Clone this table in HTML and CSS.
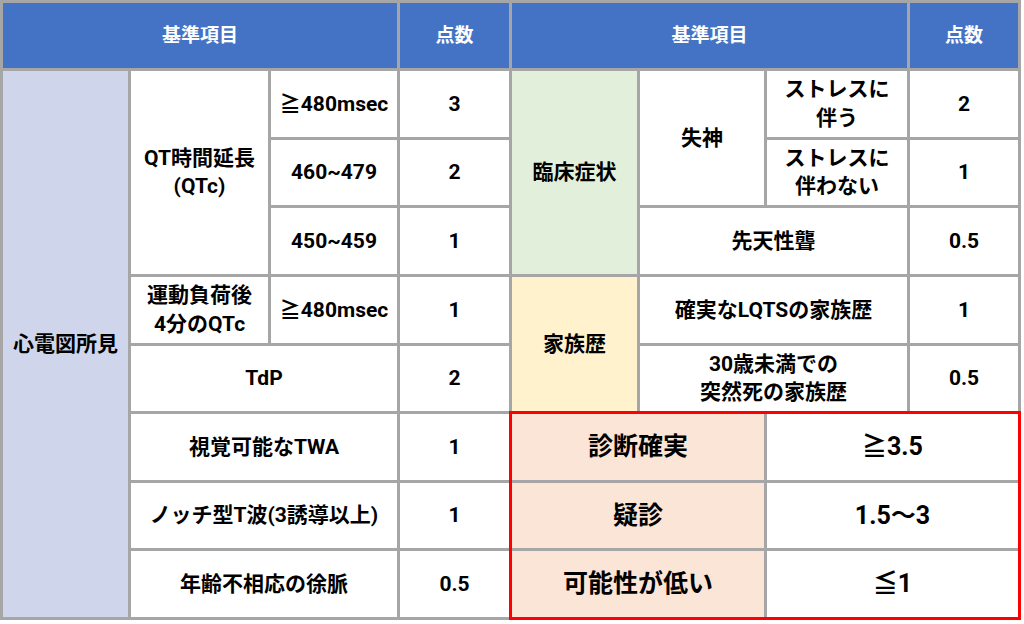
FILE: index.html
```html
<!DOCTYPE html>
<html lang="ja">
<head>
<meta charset="utf-8">
<title>LQTS 診断基準</title>
<link rel="stylesheet" href="styles.css">
</head>
<body>
<div class="table">
  <div class="cell head span-c3">基準項目</div>
  <div class="cell head">点数</div>
  <div class="cell head span-c3">基準項目</div>
  <div class="cell head">点数</div>

  <div class="cell lavender span-r8">心電図所見</div>
  <div class="cell span-r3">QT時間延長<br>(QTc)</div>
  <div class="cell">≧480msec</div>
  <div class="cell">3</div>
  <div class="cell green span-r3">臨床症状</div>
  <div class="cell span-r2">失神</div>
  <div class="cell">ストレスに<br>伴う</div>
  <div class="cell">2</div>

  <div class="cell">460~479</div>
  <div class="cell">2</div>
  <div class="cell">ストレスに<br>伴わない</div>
  <div class="cell">1</div>

  <div class="cell">450~459</div>
  <div class="cell">1</div>
  <div class="cell span-c2">先天性聾</div>
  <div class="cell">0.5</div>

  <div class="cell">運動負荷後<br>4分のQTc</div>
  <div class="cell">≧480msec</div>
  <div class="cell">1</div>
  <div class="cell yellow span-r2">家族歴</div>
  <div class="cell span-c2">確実なLQTSの家族歴</div>
  <div class="cell">1</div>

  <div class="cell span-c2">TdP</div>
  <div class="cell">2</div>
  <div class="cell span-c2">30歳未満での<br>突然死の家族歴</div>
  <div class="cell">0.5</div>

  <div class="cell span-c2">視覚可能なTWA</div>
  <div class="cell">1</div>
  <div class="result">
    <div class="cell peach big">診断確実</div>
    <div class="cell big">≧3.5</div>
    <div class="cell peach big">疑診</div>
    <div class="cell big">1.5～3</div>
    <div class="cell peach big">可能性が低い</div>
    <div class="cell big">≦1</div>
  </div>

  <div class="cell span-c2">ノッチ型T波(3誘導以上)</div>
  <div class="cell">1</div>

  <div class="cell span-c2">年齢不相応の徐脈</div>
  <div class="cell">0.5</div>
</div>
</body>
</html>
```

FILE: styles.css
```css
html, body {
  margin: 0;
  padding: 0;
  background: #ffffff;
}

body {
  font-family: Roboto, "Noto Sans CJK JP", sans-serif;
  font-weight: 700;
  color: #000000;
}

.table {
  box-sizing: border-box;
  width: 1021px;
  height: 620px;
  padding: 3px;
  background: #a6a6a6;
  display: grid;
  grid-template-columns: 125px 137px 126px 109px 125px 124px 140px 108px;
  grid-template-rows: 65px repeat(8, 1fr);
  gap: 3px;
}

.cell {
  background: #ffffff;
  display: flex;
  align-items: center;
  justify-content: center;
  text-align: center;
  font-size: 21px;
  line-height: 1.35;
}

.head {
  background: #4472c4;
  color: #ffffff;
  font-size: 19px;
}

.lavender { background: #cfd5ea; }
.green { background: #e2efda; }
.yellow { background: #fff2cc; }
.peach { background: #fbe5d6; }

.span-c2 { grid-column: span 2; }
.span-c3 { grid-column: span 3; }
.span-r2 { grid-row: span 2; }
.span-r3 { grid-row: span 3; }
.span-r8 { grid-row: span 8; }

.result {
  grid-column: span 4;
  grid-row: span 3;
  margin: -3px;
  border: 3px solid #ff0000;
  background: #a6a6a6;
  display: grid;
  grid-template-columns: 252px 1fr;
  grid-template-rows: repeat(3, 1fr);
  gap: 3px;
}

.big {
  font-size: 25px;
}
```
